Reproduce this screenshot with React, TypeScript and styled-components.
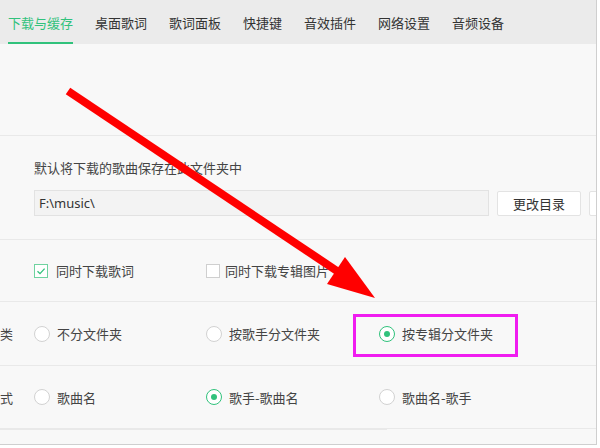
import React from "react";
import styled, { createGlobalStyle } from "styled-components";

const GREEN = "#31c27c";

const Global = createGlobalStyle`
  html, body { margin: 0; padding: 0; background: #ffffff; }
  body { font-family: "Noto Sans CJK SC", "Noto Sans", sans-serif; }
  * { box-sizing: border-box; }
`;

const Window = styled.div`
  position: relative;
  width: 597px;
  height: 445px;
  border-right: 1px solid #cfcfcf;
  border-bottom: 1px solid #cfcfcf;
  background: #f8f8f8;
  overflow: hidden;
`;

const TabBar = styled.div`
  height: 44px;
  background: #ebebeb;
  display: flex;
  align-items: stretch;
  gap: 22px;
  padding-left: 8px;
`;

const Tab = styled.div<{ $active?: boolean }>`
  display: flex;
  align-items: center;
  padding-top: 3px;
  font-size: 13px;
  color: ${(p) => (p.$active ? GREEN : "#333")};
  border-bottom: 2px solid ${(p) => (p.$active ? GREEN : "transparent")};
  white-space: nowrap;
`;

const Content = styled.div`
  display: flex;
  flex-direction: column;
`;

const Block = styled.div<{ $h: number }>`
  height: ${(p) => p.$h}px;
  border-bottom: 1px solid #e9e9e9;
`;

const DirBlock = styled(Block)`
  padding: 23px 0 0 34px;
  display: flex;
  flex-direction: column;
  gap: 13px;
`;

const Hint = styled.div`
  font-size: 13px;
  line-height: 18px;
  color: #444;
`;

const PathRow = styled.div`
  display: flex;
  align-items: center;
  gap: 8px;
`;

const PathInput = styled.div`
  width: 455px;
  height: 26px;
  flex: none;
  background: #f3f3f3;
  border: 1px solid #e2e2e2;
  display: flex;
  align-items: center;
  padding-left: 4px;
  font-family: "Noto Sans", "Open Sans", sans-serif;
  font-size: 13px;
  color: #333;
`;

const Button = styled.div`
  width: 84px;
  height: 25px;
  flex: none;
  background: #ffffff;
  border: 1px solid #e3e3e3;
  border-radius: 2px;
  display: flex;
  align-items: center;
  justify-content: center;
  font-size: 13px;
  color: #333;
  white-space: nowrap;
`;

const Row = styled(Block)`
  display: grid;
  grid-template-columns: 34px 172px 173px 1fr;
  align-items: center;
`;

const RowLabel = styled.div`
  font-size: 13px;
  color: #444;
  white-space: nowrap;
`;

const Option = styled.div<{ $gap: number }>`
  display: flex;
  align-items: center;
  gap: ${(p) => p.$gap}px;
  font-size: 13px;
  color: #444;
  white-space: nowrap;
`;

const Box = styled.span<{ $checked?: boolean }>`
  width: 14px;
  height: 14px;
  flex: none;
  border: 1px solid ${(p) => (p.$checked ? "#6fd3a0" : "#cfcfcf")};
  background: #fff;
  display: flex;
  align-items: center;
  justify-content: center;
`;

const Radio = styled.span<{ $checked?: boolean }>`
  width: 16px;
  height: 16px;
  flex: none;
  border-radius: 50%;
  border: 1px solid ${(p) => (p.$checked ? GREEN : "#d2d2d2")};
  background: #fff;
  display: flex;
  align-items: center;
  justify-content: center;
  &::after {
    content: "";
    width: 6px;
    height: 6px;
    border-radius: 50%;
    background: ${(p) => (p.$checked ? GREEN : "transparent")};
  }
`;

const PartialLine = styled.div`
  width: 387px;
  border-bottom: 1px solid #e9e9e9;
`;

const Overlay = styled.svg`
  position: absolute;
  left: 0;
  top: 0;
  pointer-events: none;
`;

const Highlight = styled.div`
  position: absolute;
  left: 353px;
  top: 314px;
  width: 165px;
  height: 43px;
  border: 3px solid #f01df0;
  pointer-events: none;
`;

const Check = () => (
  <svg width="10" height="10" viewBox="0 0 10 10">
    <path d="M1.5 5.2 L4 7.6 L8.6 2.6" fill="none" stroke={GREEN} strokeWidth="1.3" />
  </svg>
);

const tabs = ["下载与缓存", "桌面歌词", "歌词面板", "快捷键", "音效插件", "网络设置", "音频设备"];

export default function App() {
  return (
    <>
      <Global />
      <Window>
        <TabBar>
          {tabs.map((t, i) => (
            <Tab key={t} $active={i === 0}>
              {t}
            </Tab>
          ))}
        </TabBar>
        <Content>
          <Block $h={92} />
          <DirBlock $h={104}>
            <Hint>默认将下载的歌曲保存在此文件夹中</Hint>
            <PathRow>
              <PathInput>F:\music\</PathInput>
              <Button>更改目录</Button>
              <Button aria-label="打开目录" />
            </PathRow>
          </DirBlock>
          <Row $h={62}>
            <RowLabel />
            <Option $gap={8}>
              <Box $checked>
                <Check />
              </Box>
              同时下载歌词
            </Option>
            <Option $gap={5}>
              <Box />
              同时下载专辑图片
            </Option>
          </Row>
          <Row $h={64}>
            <RowLabel>类</RowLabel>
            <Option $gap={7}>
              <Radio />
              不分文件夹
            </Option>
            <Option $gap={7}>
              <Radio />
              按歌手分文件夹
            </Option>
            <Option $gap={7}>
              <Radio $checked />
              按专辑分文件夹
            </Option>
          </Row>
          <Row $h={63}>
            <RowLabel>式</RowLabel>
            <Option $gap={7}>
              <Radio />
              歌曲名
            </Option>
            <Option $gap={7}>
              <Radio $checked />
              歌手-歌曲名
            </Option>
            <Option $gap={7}>
              <Radio />
              歌曲名-歌手
            </Option>
          </Row>
          <PartialLine />
        </Content>
        <Overlay width="597" height="445" viewBox="0 0 597 445">
          <line x1="68" y1="91" x2="340" y2="273" stroke="#ff0000" strokeWidth="8" />
          <polygon points="345,257 327,284 375,298" fill="#ff0000" />
        </Overlay>
        <Highlight />
      </Window>
    </>
  );
}
